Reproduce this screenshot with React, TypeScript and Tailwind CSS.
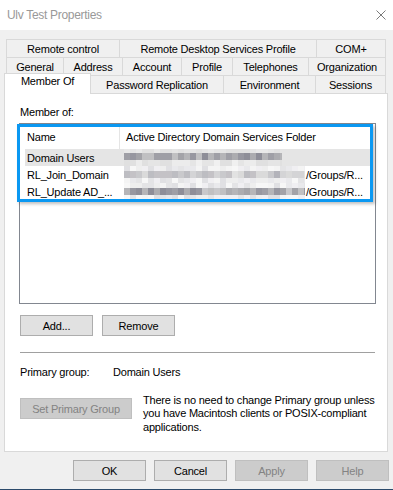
import React from "react";

function rng(seed: number) {
  let s = seed;
  return () => {
    s = (s * 1103515245 + 12345) & 0x7fffffff;
    return s / 0x7fffffff;
  };
}

const light = ["#f4f4f4", "#eeeeee", "#e9e9ec", "#f0eff2", "#e4e4e6", "#f7f7f7", "#e0e0e3"];
const mid = ["#c9c9cc", "#bdbdc2", "#d4d4d6", "#b3b3ba", "#c4c2c6", "#dadada", "#e2e2e2"];
const dark = ["#a3a3a8", "#9797a0", "#b5b5b8", "#8e8e98", "#acacb0", "#c0c0c2", "#9f9fa6", "#c8c8cb"];

type Strip = { h: number; pal: string[] };

function Mosaic({ seed, width, strips }: { seed: number; width: number; strips: Strip[] }) {
  const r = rng(seed);
  const cols = Math.ceil(width / 6);
  return (
    <div className="flex flex-col overflow-hidden shrink-0" style={{ width }}>
      {strips.map((s, i) => (
        <div key={i} className="flex shrink-0" style={{ height: s.h }}>
          {Array.from({ length: cols }).map((_, j) => (
            <div
              key={j}
              className="w-[6px] shrink-0"
              style={{ height: s.h, background: s.pal[Math.floor(r() * s.pal.length)] }}
            />
          ))}
        </div>
      ))}
    </div>
  );
}

function Tab({ w, label, last }: { w: string; label: string; last?: boolean }) {
  return (
    <div
      className={`${w} h-[18px] shrink-0 flex items-center justify-center border-t border-l border-[#d9d9d9] ${
        last ? "border-r" : ""
      }`}
    >
      {label}
    </div>
  );
}

function Btn({ label, disabled, w = "w-[73px]" }: { label: string; disabled?: boolean; w?: string }) {
  return (
    <div
      className={`${w} h-[21px] shrink-0 flex items-center justify-center border ${
        disabled ? "bg-[#cccccc] border-[#bfbfbf] text-[#838383]" : "bg-[#e1e1e1] border-[#adadad] text-black"
      }`}
    >
      {label}
    </div>
  );
}

export default function App() {
  return (
    <div className="w-[393px] h-[490px] flex flex-col bg-[#f0f0f0] text-black text-[11px] leading-[14px] tracking-[-0.2px] font-['Liberation_Sans',Arial,sans-serif] overflow-hidden">
      {/* Title bar */}
      <div className="h-[30px] shrink-0 bg-white flex items-center justify-between pl-[7px] pr-[7px]">
        <span className="text-[12px] tracking-[-0.3px] text-[#999999]">Ulv Test Properties</span>
        <svg width="10" height="10" viewBox="0 0 10 10" className="mb-[1px]">
          <path d="M0.5 0.5 L9.5 9.5 M9.5 0.5 L0.5 9.5" stroke="#7a7a7a" strokeWidth="1" fill="none" />
        </svg>
      </div>

      {/* Tabs */}
      <div className="pt-[9px] flex flex-col">
        <div className="flex ml-[6px]">
          <Tab w="w-[113px]" label="Remote control" />
          <Tab w="w-[197px]" label="Remote Desktop Services Profile" />
          <Tab w="w-[70px]" label="COM+" last />
        </div>
        <div className="flex ml-[6px]">
          <Tab w="w-[57px]" label="General" />
          <Tab w="w-[59px]" label="Address" />
          <Tab w="w-[59px]" label="Account" />
          <Tab w="w-[51px]" label="Profile" />
          <Tab w="w-[76px]" label="Telephones" />
          <Tab w="w-[78px]" label="Organization" last />
        </div>
        <div className="flex h-[18px] items-start ml-[4px]">
          <div className="relative z-10 w-[87px] h-[21px] -mt-[2px] shrink-0 bg-white border-t border-l border-r border-[#d9d9d9] flex justify-center pt-[0px]">
            Member Of
          </div>
          <div className="w-[132px] h-[18px] shrink-0 flex items-center justify-center border-t border-[#d9d9d9]">
            Password Replication
          </div>
          <Tab w="w-[92px]" label="Environment" />
          <Tab w="w-[71px]" label="Sessions" last />
        </div>
      </div>

      {/* Panel */}
      <div className="ml-[4px] w-[384px] h-[359px] shrink-0 bg-white border border-[#d9d9d9] flex flex-col">
        <div className="ml-[15px] mt-[11px]">Member of:</div>

        {/* List box */}
        <div className="relative ml-[14px] mt-[4px] w-[357px] h-[181px] shrink-0 border border-[#828790] bg-white flex flex-col">
          <div className="flex h-[25px] shrink-0">
            <div className="w-[100px] shrink-0 flex items-center pl-[7px] border-r border-[#e5e5e5]">Name</div>
            <div className="flex items-center pl-[6px]">Active Directory Domain Services Folder</div>
          </div>
          <div className="flex h-[17px] ml-[5px] mr-[3px] items-center bg-[#e5e5e5]">
            <div className="w-[95px] shrink-0 pl-[2px]">Domain Users</div>
            <div className="ml-[4px]">
              <Mosaic
                seed={7}
                width={158}
                strips={[
                  { h: 4, pal: ["#e5e5e5", "#e9e9e9", "#e1e1e1"] },
                  { h: 7, pal: dark },
                  { h: 6, pal: ["#e5e5e5", "#ececec", "#e0e0e0", "#f0f0f0"] },
                ]}
              />
            </div>
          </div>
          <div className="flex h-[17px] ml-[5px] mr-[3px] items-center">
            <div className="w-[95px] shrink-0 pl-[2px]">RL_Join_Domain</div>
            <div className="ml-[4px]">
              <Mosaic
                seed={31}
                width={181}
                strips={[
                  { h: 5, pal: light },
                  { h: 7, pal: mid },
                  { h: 5, pal: light },
                ]}
              />
            </div>
            <div className="ml-[1px] whitespace-nowrap">/Groups/R...</div>
          </div>
          <div className="flex h-[17px] ml-[5px] mr-[3px] items-center">
            <div className="w-[95px] shrink-0 pl-[2px] whitespace-nowrap">RL_Update AD_...</div>
            <div className="ml-[4px]">
              <Mosaic
                seed={97}
                width={181}
                strips={[
                  { h: 5, pal: light },
                  { h: 7, pal: dark },
                  { h: 5, pal: light },
                ]}
              />
            </div>
            <div className="ml-[1px] whitespace-nowrap">/Groups/R...</div>
          </div>

          {/* highlight annotation */}
          <div className="absolute left-[-3px] top-[0px] w-[356px] h-[78px] border-[3px] border-[#0a98f2] shadow-[2px_2px_3px_rgba(0,0,0,0.25)] pointer-events-none" />
        </div>

        {/* Add / Remove */}
        <div className="flex ml-[15px] mt-[11px] gap-[9px]">
          <Btn label="Add..." />
          <Btn label="Remove" />
        </div>

        <div className="ml-[15px] mt-[16px] w-[355px] h-[1px] shrink-0 bg-[#a0a0a0]" />

        <div className="flex ml-[15px] mt-[12px]">
          <div className="w-[93px] shrink-0">Primary group:</div>
          <div>Domain Users</div>
        </div>

        <div className="flex ml-[15px] mt-[15px] items-start">
          <div className="mt-[4px]">
            <Btn label="Set Primary Group" disabled w="w-[112px]" />
          </div>
          <div className="ml-[11px] leading-[13.3px] whitespace-nowrap">
            There is no need to change Primary group unless
            <br />
            you have Macintosh clients or POSIX-compliant
            <br />
            applications.
          </div>
        </div>
      </div>

      {/* Bottom buttons */}
      <div className="flex ml-[73px] mt-[8px] gap-[8px]">
        <Btn label="OK" />
        <Btn label="Cancel" />
        <Btn label="Apply" disabled />
        <Btn label="Help" disabled />
      </div>

      <div className="mt-auto h-[1px] shrink-0 bg-[#2b4a6b]" />
    </div>
  );
}
